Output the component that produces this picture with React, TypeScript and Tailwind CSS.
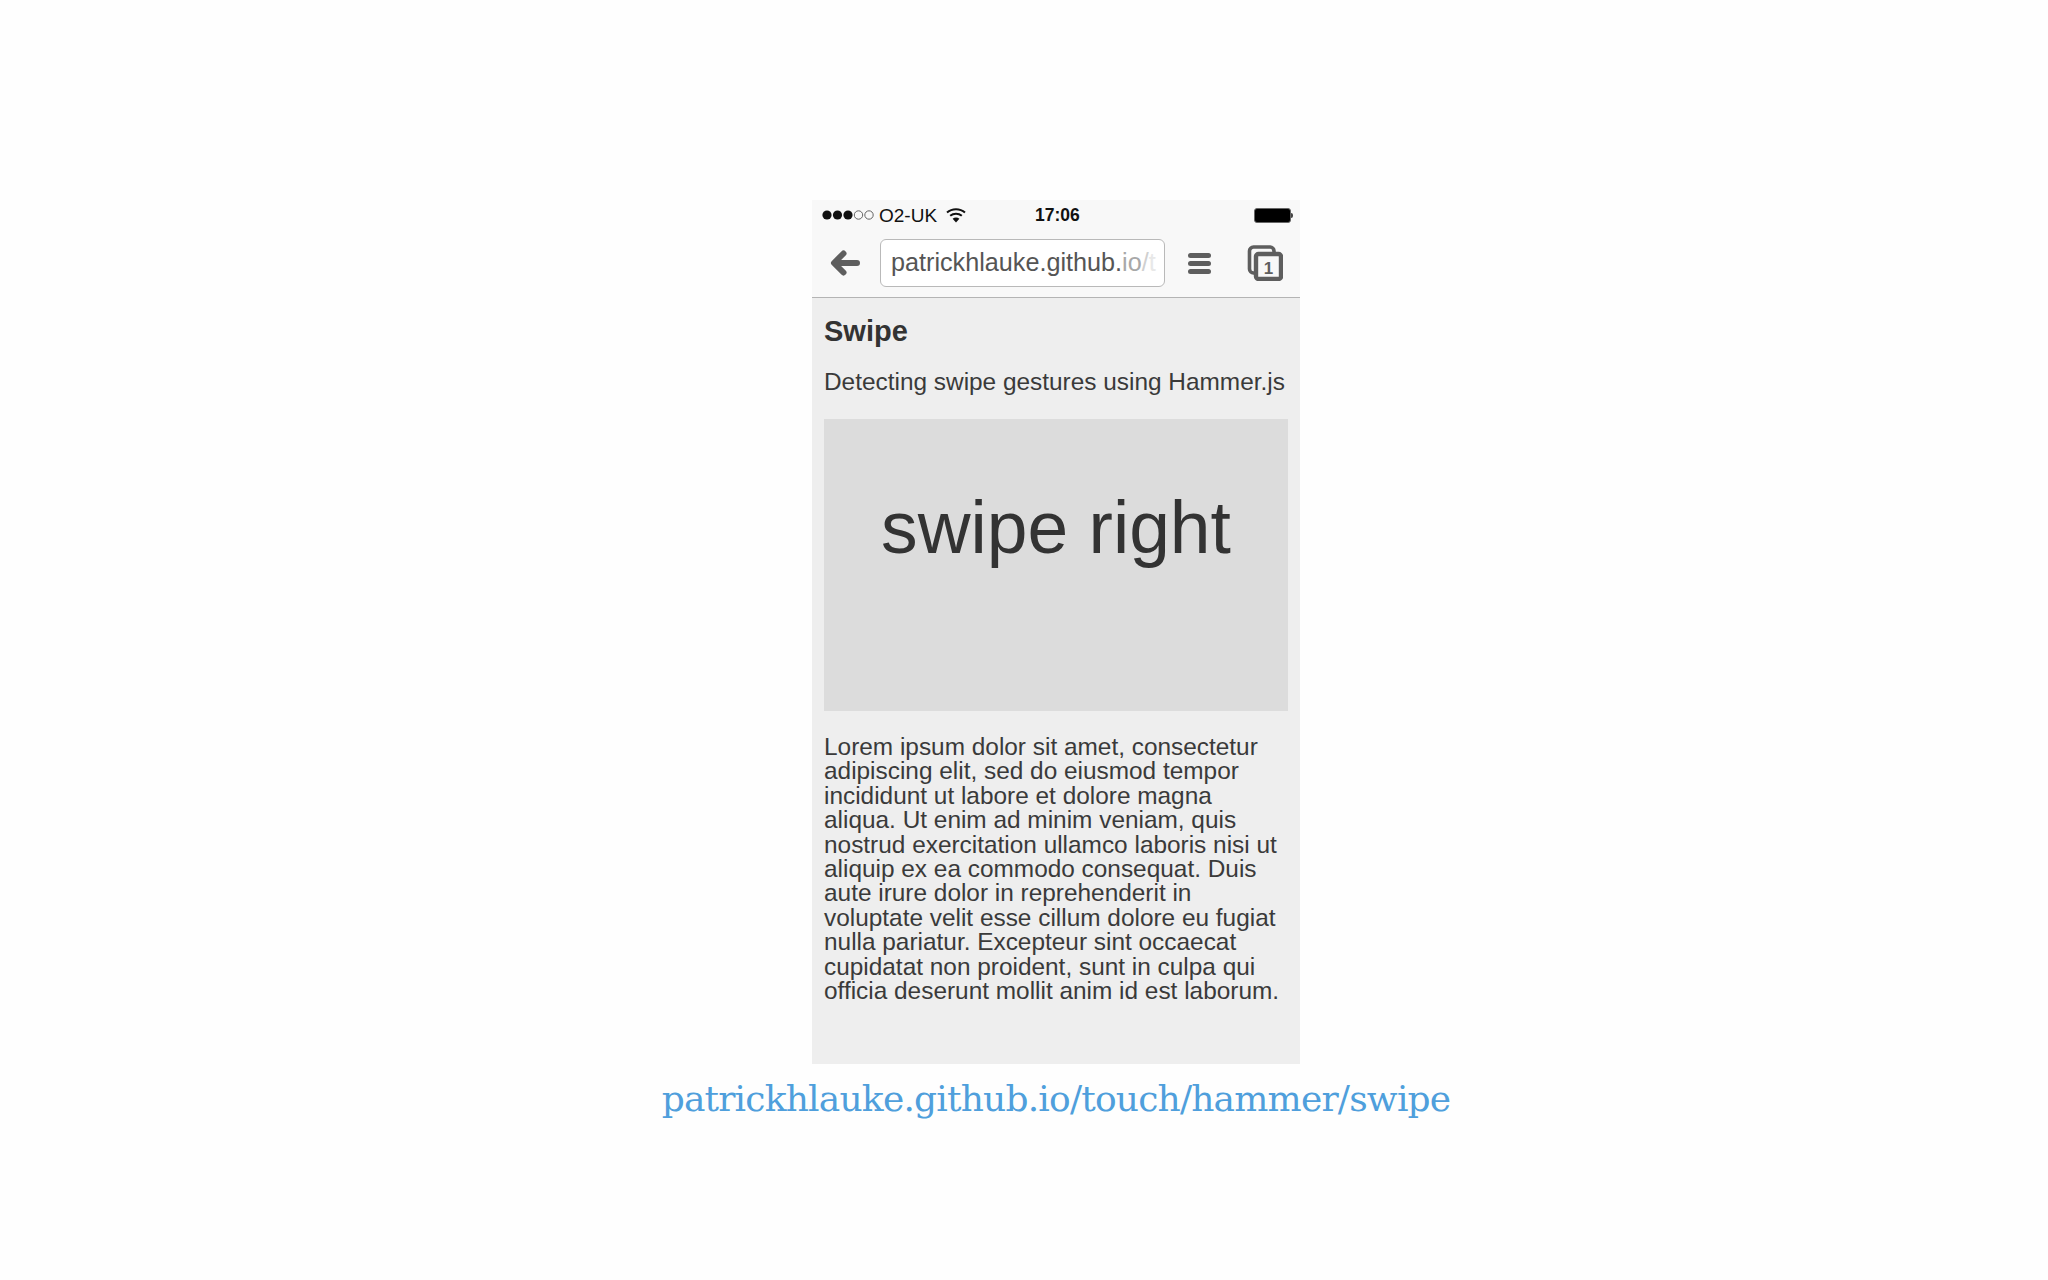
import React from "react";

const sans = "font-['Liberation_Sans',Arial,sans-serif]";

function SignalDots() {
  return (
    <svg width="52" height="12" viewBox="0 0 52 12" aria-hidden="true">
      <circle cx="5" cy="6" r="4.6" fill="#111" />
      <circle cx="15.5" cy="6" r="4.6" fill="#111" />
      <circle cx="26" cy="6" r="4.6" fill="#111" />
      <circle cx="36.5" cy="6" r="4.2" fill="none" stroke="#555" strokeWidth="0.9" />
      <circle cx="47" cy="6" r="4.2" fill="none" stroke="#555" strokeWidth="0.9" />
    </svg>
  );
}

function Wifi() {
  return (
    <svg width="20" height="15" viewBox="0 0 20 15" aria-hidden="true">
      <path d="M1 4.6C6 0.2 14 0.2 19 4.6" fill="none" stroke="#111" strokeWidth="2" />
      <path d="M4.2 7.8C7.5 5 12.5 5 15.8 7.8" fill="none" stroke="#111" strokeWidth="2" />
      <path d="M10 14.5L6.6 10.8C8.6 9.2 11.4 9.2 13.4 10.8Z" fill="#111" />
    </svg>
  );
}

function Battery() {
  return (
    <div className="flex items-center">
      <div className="w-[37px] h-[15px] rounded-[3px] bg-black border border-[#666]" />
      <div className="w-[2px] h-[5px] bg-[#444] rounded-r-sm" />
    </div>
  );
}

function BackArrow() {
  return (
    <svg width="30" height="26" viewBox="0 0 30 26" aria-hidden="true">
      <path d="M27 13H5M13.5 3.5L4 13l9.5 9.5" fill="none" stroke="#5e5e5e" strokeWidth="6" strokeLinecap="round" strokeLinejoin="round" />
    </svg>
  );
}

function MenuIcon() {
  return (
    <div className="flex flex-col gap-[3px] w-[23px]">
      <div className="h-[5px] rounded-full bg-[#5e5e5e]" />
      <div className="h-[5px] rounded-full bg-[#5e5e5e]" />
      <div className="h-[5px] rounded-full bg-[#5e5e5e]" />
    </div>
  );
}

function TabsIcon() {
  return (
    <svg width="36" height="36" viewBox="0 0 36 36" aria-hidden="true">
      <path d="M8 28H6.5A4 4 0 0 1 2.5 24V6A4 4 0 0 1 6.5 2H23a4 4 0 0 1 4 4V8" fill="none" stroke="#5e5e5e" strokeWidth="3.6" />
      <rect x="9" y="9" width="25" height="25" rx="2.5" fill="#f8f8f8" stroke="#5e5e5e" strokeWidth="4.4" />
      <text x="21.5" y="28.5" textAnchor="middle" fontSize="17" fontWeight="700" fontFamily="Liberation Sans" fill="#5e5e5e">1</text>
    </svg>
  );
}

export default function App() {
  return (
    <div className={`min-h-[1280px] bg-[#fefefe] flex flex-col items-center pt-[200px] pl-[64px] ${sans}`}>
      <div className="w-[488px] bg-[#eeeeee] h-[864px] text-[#333]">
        {/* Status bar + browser toolbar */}
        <div className="h-[98px] bg-[#f8f8f8] border-b border-[#b4b4b4] flex flex-col">
          <div className="h-[30px] flex items-center pl-[10px] pr-[7px] text-[#111]">
            <SignalDots />
            <span className="ml-[5px] text-[19px] leading-none">O2-UK</span>
            <span className="ml-[9px] flex"><Wifi /></span>
            <span className="ml-[69px] mt-[2px] text-[17.5px] leading-none font-semibold">17:06</span>
            <span className="ml-auto flex"><Battery /></span>
          </div>
          <div className="flex-1 flex items-center pl-[18px] pb-[1px]">
            <BackArrow />
            <div className="ml-[20px] w-[285px] h-[48px] rounded-[6px] bg-white border border-[#b9b9b9] flex items-center pl-[10px] overflow-hidden text-[25.2px] text-[#555] whitespace-nowrap">
              patrickhlauke.github.<span className="text-[#a8a8a8]">io</span><span className="text-[#d0d0d0]">/</span><span className="text-[#e8e8e8]">t</span>
            </div>
            <div className="ml-[23px] flex"><MenuIcon /></div>
            <div className="ml-[36px] flex"><TabsIcon /></div>
          </div>
        </div>

        {/* Page content */}
        <div className="px-[12px]">
          <h1 className="mt-[16px] text-[29px] leading-[34px] font-bold text-[#333]">Swipe</h1>
          <p className="mt-[20px] text-[24.4px] leading-[28px] text-[#3a3a3a]">Detecting swipe gestures using Hammer.js</p>
          <div className="mt-[23px] h-[292px] bg-[#dcdcdc] text-center pt-[67px] text-[73.2px] leading-[84px] text-[#333]">swipe right</div>
          <p className="mt-[24px] text-[24.4px] leading-[24.4px] text-[#3a3a3a]">
            Lorem ipsum dolor sit amet, consectetur adipiscing elit, sed do eiusmod tempor incididunt ut labore et dolore magna aliqua. Ut enim ad minim veniam, quis nostrud exercitation ullamco laboris nisi ut aliquip ex ea commodo consequat. Duis aute irure dolor in reprehenderit in voluptate velit esse cillum dolore eu fugiat nulla pariatur. Excepteur sint occaecat cupidatat non proident, sunt in culpa qui officia deserunt mollit anim id est laborum.
          </p>
        </div>
      </div>
      <div className="mt-[10px] text-[36px] leading-[50px] tracking-[-0.8px] text-[#4f9fdc] font-['DejaVu_Serif',serif] whitespace-nowrap">
        patrickhlauke.github.io/touch/hammer/swipe
      </div>
    </div>
  );
}
